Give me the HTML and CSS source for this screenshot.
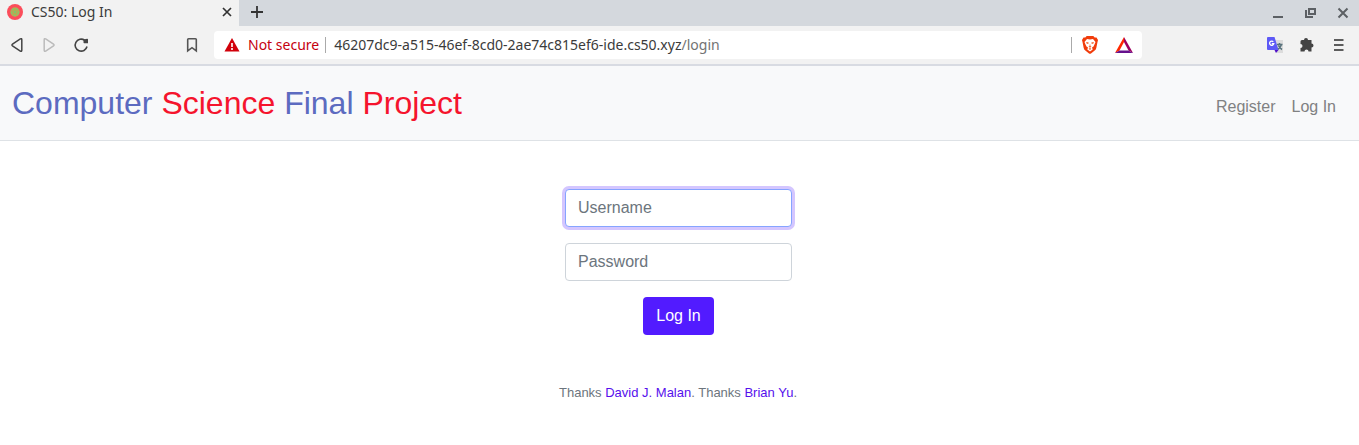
FILE: index.html
```html
<!DOCTYPE html>
<html lang="en">
<head>
<meta charset="utf-8">
<title>CS50: Log In</title>
<link rel="stylesheet" href="styles.css">
</head>
<body>
<div class="browser">
  <div class="tabstrip">
    <div class="tab">
      <svg class="favicon" width="16" height="16" viewBox="0 0 16 16"><circle cx="8" cy="8" r="8" fill="#fb4d5b"/><circle cx="8" cy="8" r="4.7" fill="#c5a34e"/><circle cx="8" cy="8" r="3.4" fill="none" stroke="#8bc268" stroke-width="1.6" stroke-dasharray="3 1"/><circle cx="8" cy="8" r="1.4" fill="#83c765"/></svg>
      <span class="tab-title">CS50: Log In</span>
      <button class="icon-button tab-close" aria-label="Close tab"><svg width="10" height="10" viewBox="0 0 10 10"><path d="M1 1l8 8M9 1l-8 8" stroke="#333" stroke-width="1.7"/></svg></button>
    </div>
    <button class="icon-button new-tab" aria-label="New tab"><svg width="12" height="12" viewBox="0 0 12 12"><path d="M6 0v12M0 6h12" stroke="#333" stroke-width="1.8"/></svg></button>
    <div class="window-controls">
      <button class="icon-button" aria-label="Minimize"><svg width="12" height="12" viewBox="0 0 12 12"><path d="M0 10h10" stroke="#5c6064" stroke-width="2"/></svg></button>
      <button class="icon-button" aria-label="Restore"><svg width="12" height="12" viewBox="0 0 12 12"><path d="M4 2h6v5H4zM2 4H1v6h6V9" fill="none" stroke="#5c6064" stroke-width="2"/></svg></button>
      <button class="icon-button" aria-label="Close window"><svg width="12" height="12" viewBox="0 0 12 12"><path d="M1.5 1.5l9 9M10.500 1.500l-9 9" stroke="#5c6064" stroke-width="2"/></svg></button>
    </div>
  </div>
  <div class="toolbar">
    <div class="navigation">
      <button class="icon-button" aria-label="Back"><svg width="16" height="16" viewBox="0 0 16 16"><path d="M11.300 1.900Q12.800 1.200 12.800 2.700V13.300Q12.800 14.800 11.300 14.100L3.500 8.800Q2.400 8 3.500 7.200Z" fill="none" stroke="#444" stroke-width="1.5"/></svg></button>
      <button class="icon-button" aria-label="Forward"><svg width="16" height="16" viewBox="0 0 16 16"><path d="M4.700 1.900Q3.200 1.200 3.200 2.700V13.300Q3.200 14.800 4.700 14.100L12.500 8.800Q13.600 8 12.500 7.200Z" fill="none" stroke="#bbb" stroke-width="1.5"/></svg></button>
      <button class="icon-button" aria-label="Reload"><svg width="16" height="16" viewBox="0 0 16 16"><path d="M11.700 3.300A6 6 0 1 0 14 9.500" fill="none" stroke="#444" stroke-width="1.6"/><path d="M10.500 2.500L14.200 1.800Q15 1.800 15 2.600V6.300H11.200Q10.500 6.300 10.500 5.500Z" fill="#444"/></svg></button>
    </div>
    <button class="icon-button" aria-label="Bookmark this page"><svg width="16" height="16" viewBox="0 0 16 16"><path d="M3.700 2.500Q3.700 1.700 4.500 1.700H11.500Q12.300 1.700 12.300 2.500V14L8 10.700L3.700 14Z" fill="none" stroke="#555" stroke-width="1.6"/></svg></button>
    <div class="address-bar">
      <svg class="warning" width="16" height="14" viewBox="0 0 16 14"><path d="M8 0L15.500 13.500H.5Z" fill="#d1000a"/><path d="M8 5v4M8 10v2" stroke="#fff" stroke-width="1.6"/></svg>
      <span class="not-secure">Not secure</span>
      <span class="divider"></span>
      <span class="url">46207dc9-a515-46ef-8cd0-2ae74c815ef6-ide.cs50.xyz<span class="path">/login</span></span>
      <span class="divider"></span>
      <button class="icon-button shield" aria-label="Brave shields"><svg width="16" height="18" viewBox="0 0 16 18"><path d="M4.700 0H11.300L12.700 1.500L14.500 1.600L16 4L15.500 6L14.300 12Q14 13.500 12.700 14.500L9 17.500Q8 18.200 7 17.500L3.300 14.500Q2 13.500 1.700 12L.5 6L0 4L1.500 1.600L3.300 1.500Z" fill="#f13c0b"/><path d="M5 3L8 3.600L11 3L13.500 6L12.700 8L11.500 10.500L10 11.400L10.700 13.400L8 15.400L5.300 13.400L6 11.400L4.500 10.500L3.300 8L2.500 6Z" fill="#fff"/><path d="M4.200 6L6.700 6.500L6.200 8L4.500 7.500ZM11.800 6L9.300 6.500L9.800 8L11.500 7.500ZM8 7.500L8.500 10L9.500 10.700L8 11.800L6.500 10.700L7.500 10ZM6.700 12.800L8 12.100L9.300 12.800L8 13.900Z" fill="#f1642f"/></svg></button>
      <button class="icon-button rewards" aria-label="Brave rewards"><svg width="18" height="16" viewBox="0 0 18 16"><path d="M9 0L0 16L4.500 13.500L9 5Z" fill="#ff2800"/><path d="M9 0L18 16L13.500 13.500L9 5Z" fill="#9e0060"/><path d="M0 16H18L13.500 13.500H4.500Z" fill="#65108c"/></svg></button>
    </div>
    <div class="extensions">
      <button class="icon-button" aria-label="Translate"><svg width="16" height="16" viewBox="0 0 16 16"><path d="M6 3H16V16H10Z" fill="#dcdcdc"/><path d="M10 7.500H15.500M12.500 6V7.500M14.500 7.500Q13.500 11 10.500 12.500M11.500 8.500Q12.500 11 15 12.500" fill="none" stroke="#58727c" stroke-width="1.5"/><path d="M0 1Q0 0 1 0H7.500L11.500 13H1Q0 13 0 12Z" fill="#5d59f6"/><path d="M7.500 13H11.500L9 16Z" fill="#5010c8"/><path d="M6.300 4.800A2.100 2.100 0 1 0 6.800 6.700H4.800" fill="none" stroke="#fff" stroke-width="1.3"/></svg></button>
      <button class="icon-button" aria-label="Extensions"><svg width="16" height="16" viewBox="0 0 16 16"><path d="M3 3H5A2 2 0 0 1 9 3H12.500V6.500A2 2 0 0 1 12.500 10.500V14.500H9.500A2 2 0 0 0 5.500 14.500H1.500V11A2 2 0 0 0 1.500 7V4.500Q1.500 3 3 3Z" fill="#444"/></svg></button>
      <button class="icon-button" aria-label="Menu"><svg width="16" height="16" viewBox="0 0 16 16"><path d="M3 3H12.500M3 8H12.500M3 13H12.500" stroke="#5c5c5c" stroke-width="1.800"/></svg></button>
    </div>
  </div>
</div>
<nav class="navbar">
  <a class="brand" href="#"><span class="blue">Computer</span> <span class="red">Science</span> <span class="blue">Final</span> <span class="red">Project</span></a>
  <div class="nav-links"><a href="#">Register</a><a href="#">Log In</a></div>
</nav>
<main class="main">
  <form class="login-form">
    <input class="form-control focused" type="text" placeholder="Username" aria-label="Username">
    <input class="form-control" type="password" placeholder="Password" aria-label="Password">
    <button class="submit" type="submit">Log In</button>
  </form>
</main>
<footer class="footer">Thanks <a href="#">David J. Malan</a>. Thanks <a href="#">Brian Yu</a>.</footer>
</body>
</html>
```
FILE: styles.css
```css
* { box-sizing: border-box; }
body {
  margin: 0;
  background: #fff;
  font: 16px/24px "Liberation Sans", Arial, sans-serif;
}
a { text-decoration: none; }
svg { display: block; flex: none; }
.browser {
  border-bottom: 2px solid #d8dbe2;
  background: #f2f2f2;
  color: #3b3b3b;
  font: 14px/20px "Noto Sans", sans-serif;
}
.icon-button {
  flex: none;
  padding: 0;
  border: 0;
  background: transparent;
}
.tabstrip {
  display: flex;
  align-items: center;
  height: 26px;
  background: #d4d8dd;
}
.tab {
  display: flex;
  align-items: center;
  gap: 8px;
  width: 239px;
  height: 26px;
  padding: 0 7px;
  background: #f2f2f2;
}
.favicon, .tab-title, .tab-close, .new-tab, .window-controls { margin-bottom: 2px; }
.tab-close { margin-left: auto; }
.new-tab { margin-left: 12px; }
.window-controls {
  display: flex;
  gap: 20px;
  margin-left: auto;
  padding-top: 1px;
  padding-right: 10px;
}
.toolbar {
  display: flex;
  align-items: center;
  height: 38px;
  padding-left: 9px;
}
.navigation {
  display: flex;
  gap: 16px;
  margin-right: 95px;
}
.address-bar {
  display: flex;
  flex: 1;
  align-items: center;
  height: 28px;
  margin-left: 14px;
  padding: 0 9px 0 10px;
  border-radius: 4px;
  background: #fff;
  white-space: nowrap;
}
.not-secure { margin: 0 6px 0 8px; color: #c5000f; }
.divider { width: 1px; height: 16px; background: #aaa; }
.url { flex: 1; margin-left: 8px; }
.path { color: #737373; }
.shield { margin-left: 10px; }
.rewards { margin-left: 17px; }
.extensions {
  display: flex;
  gap: 16px;
  margin-left: 125px;
  padding-right: 12px;
}
.navbar {
  display: flex;
  align-items: center;
  justify-content: space-between;
  padding: 13px 23px 13px 12px;
  border-bottom: 1px solid #dee2e6;
  background: #f8f9fa;
}
.brand { font-size: 32px; line-height: 48px; }
.blue { color: #5c6bc0; }
.red { color: #f5142d; }
.nav-links { display: flex; gap: 16px; padding-top: 8px; }
.nav-links a { color: #808182; }
.main { padding: 48px 2px 0 0; }
.login-form {
  display: flex;
  flex-direction: column;
  align-items: center;
  gap: 16px;
}
.form-control {
  width: 227px;
  height: 38px;
  padding: 6px 12px;
  border: 1px solid #ced4da;
  border-radius: 4px;
  outline: 0;
  font: inherit;
}
.form-control::placeholder { color: #6c757d; opacity: 1; }
.focused {
  border-color: #86a4ff;
  box-shadow: 0 0 0 3px #d4c6ff;
}
.submit {
  padding: 7px 13px;
  border: 0;
  border-radius: 4px;
  background: #521bff;
  color: #fff;
  font: inherit;
}
.footer {
  padding: 48px 3px 40px 0;
  color: #6c757d;
  font-size: 13px;
  line-height: 20px;
  text-align: center;
}
.footer a { color: #5610ed; }
```
